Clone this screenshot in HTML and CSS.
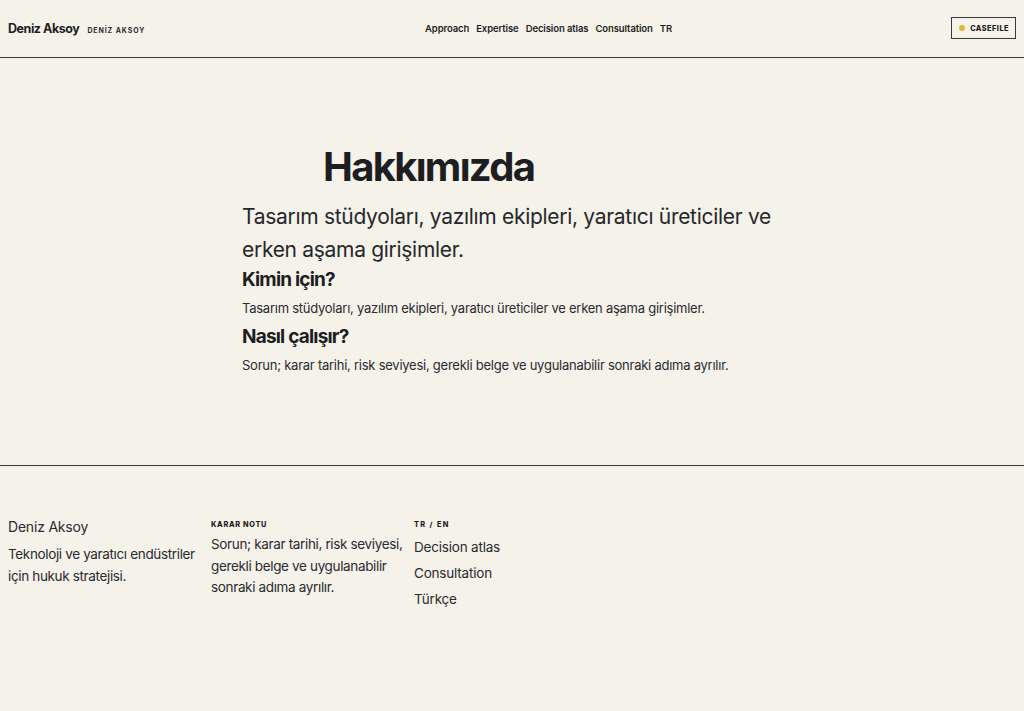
FILE: index.html
```html
<!DOCTYPE html>
<html lang="tr">
<head>
<meta charset="utf-8">
<title>Hakkımızda — Deniz Aksoy</title>
<link rel="stylesheet" href="styles.css">
</head>
<body>
<header class="site-header">
  <div class="brand">
    <span class="brand-name">Deniz Aksoy</span>
    <span class="brand-tag">DENİZ AKSOY</span>
  </div>
  <nav class="main-nav">
    <a href="#">Approach</a>
    <a href="#">Expertise</a>
    <a href="#">Decision atlas</a>
    <a href="#">Consultation</a>
    <a href="#">TR</a>
  </nav>
  <a class="casefile" href="#"><span class="dot"></span>CASEFILE</a>
</header>
<main class="content">
  <h1 class="title">Hakkımızda</h1>
  <p class="lead">Tasarım stüdyoları, yazılım ekipleri, yaratıcı üreticiler ve erken aşama girişimler.</p>
  <h2 class="subhead">Kimin için?</h2>
  <p class="body">Tasarım stüdyoları, yazılım ekipleri, yaratıcı üreticiler ve erken aşama girişimler.</p>
  <h2 class="subhead second">Nasıl çalışır?</h2>
  <p class="body">Sorun; karar tarihi, risk seviyesi, gerekli belge ve uygulanabilir sonraki adıma ayrılır.</p>
</main>
<footer class="site-footer">
  <div class="col">
    <p class="f-name">Deniz Aksoy</p>
    <p class="f-text">Teknoloji ve yaratıcı endüstriler için hukuk stratejisi.</p>
  </div>
  <div class="col">
    <p class="f-label">KARAR NOTU</p>
    <p class="f-text f-note">Sorun; karar tarihi, risk seviyesi, gerekli belge ve uygulanabilir sonraki adıma ayrılır.</p>
  </div>
  <div class="col">
    <p class="f-label wide">TR / EN</p>
    <ul class="f-links">
      <li><a href="#">Decision atlas</a></li>
      <li><a href="#">Consultation</a></li>
      <li><a href="#">Türkçe</a></li>
    </ul>
  </div>
</footer>
</body>
</html>
```

FILE: styles.css
```css
* { box-sizing: border-box; }
html, body { margin: 0; padding: 0; }
body {
  background: #f5f2ea;
  color: #1d1e22;
  font-family: Inter, "Noto Sans", "Liberation Sans", sans-serif;
  min-height: 711px;
}
a { color: inherit; text-decoration: none; }
p { margin: 0; }

.site-header {
  height: 58px;
  border-bottom: 1px solid #3a3a3a;
  display: flex;
  align-items: center;
  justify-content: space-between;
  padding: 0 8px;
  position: relative;
}
.brand { display: flex; align-items: baseline; gap: 8px; }
.brand-name { font-weight: 700; font-size: 12.5px; letter-spacing: -0.45px; }
.brand-tag { font-size: 7px; font-weight: 700; letter-spacing: 0.9px; color: #2a2b30; }
.main-nav {
  position: absolute;
  left: 425px;
  top: 0;
  height: 57px;
  display: flex;
  align-items: center;
  gap: 7px;
  font-size: 9.5px;
  font-weight: 600;
  letter-spacing: -0.1px;
}
.casefile {
  display: flex;
  align-items: center;
  gap: 5px;
  height: 22px;
  padding: 0 6px 0 7px;
  border: 1px solid #3a3a3a;
  font-size: 7.3px;
  font-weight: 800;
  letter-spacing: 0.5px;
  margin-top: -1px;
}
.dot { width: 6px; height: 6px; border-radius: 50%; background: #e2b43e; }

.content {
  width: 540px;
  margin: 0 auto;
  padding: 85px 0 0;
  height: 407px;
}
.title {
  margin: 0 0 9px 81px;
  font-size: 40px;
  line-height: 48px;
  font-weight: 700;
  letter-spacing: -1.7px;
}
.lead {
  font-size: 21px;
  line-height: 33px;
  font-weight: 400;
  letter-spacing: -0.3px;
  color: #26272b;
}
.subhead {
  margin: 2px 0 0;
  font-size: 19px;
  line-height: 24px;
  font-weight: 700;
  letter-spacing: -0.8px;
}
.subhead.second { margin-top: 7px; }
.body {
  margin-top: 6px;
  font-size: 13px;
  line-height: 20px;
  letter-spacing: -0.25px;
  color: #2a2b30;
}

.site-footer {
  border-top: 1px solid #3a3a3a;
  display: grid;
  grid-template-columns: repeat(5, 203px);
  padding: 50px 8px 0 8px;
}
.col { min-width: 0; padding-right: 4px; }
.f-name { font-size: 14px; line-height: 22px; margin-top: 0; color: #2a2b30; letter-spacing: -0.2px; }
.f-text { font-size: 13.5px; line-height: 21.7px; color: #2a2b30; letter-spacing: -0.35px; }
.f-name + .f-text { margin-top: 6px; }
.f-label { font-size: 7.3px; font-weight: 800; letter-spacing: 0.7px; line-height: 12px; margin-top: 3px; }
.f-label.wide { letter-spacing: 1.4px; }
.f-note { margin-top: 3px; }
.f-links { list-style: none; margin: 3px 0 0; padding: 0; font-size: 13.5px; line-height: 26px; color: #2a2b30; letter-spacing: -0.2px; }
```
